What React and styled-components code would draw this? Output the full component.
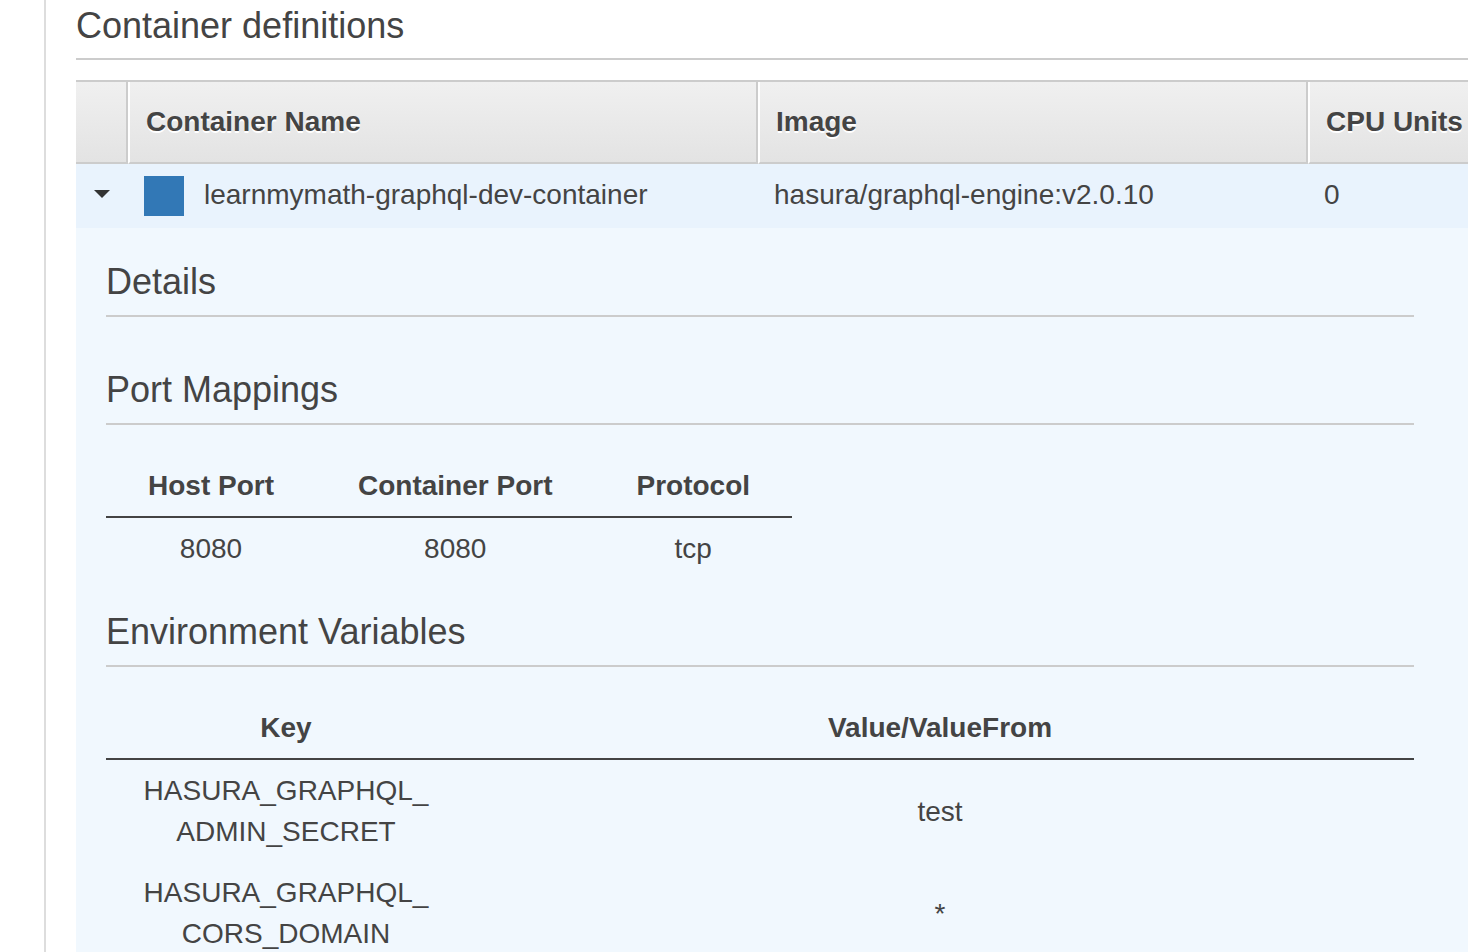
import React from 'react';
import styled, { createGlobalStyle } from 'styled-components';

const GlobalStyle = createGlobalStyle`
    * { box-sizing: border-box; }
    html, body {
        margin: 0;
        padding: 0;
        overflow: hidden;
        background: #FFFFFF;
        font-family: "Liberation Sans", Arial, Helvetica, sans-serif;
        color: #444444;
    }
`;

const portMappings = [
    { host: '8080', container: '8080', protocol: 'tcp' },
];

const envVars = [
    { key: ['HASURA_GRAPHQL_', 'ADMIN_SECRET'], value: 'test' },
    { key: ['HASURA_GRAPHQL_', 'CORS_DOMAIN'], value: '*' },
];

export default function App() {
    return (
        <>
            <GlobalStyle />
            <Page>
                <Panel>
                    <Title>Container definitions</Title>
                    <Grid>
                        <thead>
                            <tr>
                                <HeadCell $w={52} $first />
                                <HeadCell $w={630}>Container Name</HeadCell>
                                <HeadCell $w={550}>Image</HeadCell>
                                <HeadCell $w={400}>CPU Units</HeadCell>
                            </tr>
                        </thead>
                        <tbody>
                            <SelectedRow>
                                <ToggleCell><Caret /></ToggleCell>
                                <RowCell>
                                    <NameBox>
                                        <Swatch />
                                        learnmymath-graphql-dev-container
                                    </NameBox>
                                </RowCell>
                                <RowCell>hasura/graphql-engine:v2.0.10</RowCell>
                                <RowCell>0</RowCell>
                            </SelectedRow>
                            <tr>
                                <DetailCell colSpan={4}>
                                    <Detail>
                                        <Section>
                                            <SectionTitle>Details</SectionTitle>
                                            <SectionBody />
                                        </Section>
                                        <Section>
                                            <SectionTitle>Port Mappings</SectionTitle>
                                            <SectionBody>
                                                <PortTable>
                                                    <thead>
                                                        <tr>
                                                            <SubHead>Host Port</SubHead>
                                                            <SubHead>Container Port</SubHead>
                                                            <SubHead>Protocol</SubHead>
                                                        </tr>
                                                    </thead>
                                                    <tbody>
                                                        {portMappings.map((p, i) => (
                                                            <tr key={i}>
                                                                <SubCell>{p.host}</SubCell>
                                                                <SubCell>{p.container}</SubCell>
                                                                <SubCell>{p.protocol}</SubCell>
                                                            </tr>
                                                        ))}
                                                    </tbody>
                                                </PortTable>
                                            </SectionBody>
                                        </Section>
                                        <Section>
                                            <SectionTitle>Environment Variables</SectionTitle>
                                            <SectionBody>
                                                <EnvTable>
                                                    <colgroup>
                                                        <col style={{ width: 360 }} />
                                                        <col />
                                                    </colgroup>
                                                    <thead>
                                                        <tr>
                                                            <SubHead>Key</SubHead>
                                                            <SubHead>Value/ValueFrom</SubHead>
                                                        </tr>
                                                    </thead>
                                                    <tbody>
                                                        {envVars.map((v, i) => (
                                                            <tr key={i}>
                                                                <KeyCell>{v.key[0]}<wbr />{v.key[1]}</KeyCell>
                                                                <SubCell>{v.value}</SubCell>
                                                            </tr>
                                                        ))}
                                                    </tbody>
                                                </EnvTable>
                                            </SectionBody>
                                        </Section>
                                    </Detail>
                                </DetailCell>
                            </tr>
                        </tbody>
                    </Grid>
                </Panel>
            </Page>
        </>
    );
}

//#region -= Styled Components =-
const Page = styled.div`
    width: 100vw;
    height: 100vh;
    overflow: hidden;
`;
const Panel = styled.div`
    margin-left: 44px;
    min-height: 100vh;
    border-left: 2px solid #DDDDDD;
    padding-left: 30px;
`;
const Title = styled.h2`
    margin: 0;
    padding: 4px 0 10px 0;
    font-size: 36px;
    line-height: 44px;
    font-weight: 400;
    color: #444444;
    border-bottom: 2px solid #CCCCCC;
`;
const Grid = styled.table`
    margin-top: 20px;
    border-collapse: separate;
    border-spacing: 0;
    table-layout: fixed;
    width: 1632px;
    border-top: 2px solid #CCCCCC;
`;
const HeadCell = styled.th`
    width: ${ props => props.$w }px;
    height: 82px;
    padding: 0 16px;
    text-align: left;
    vertical-align: middle;
    font-size: 28px;
    font-weight: 700;
    color: #444444;
    text-shadow: 0 2px 0 #FFFFFF;
    white-space: nowrap;
    background: linear-gradient(#F0F0F0, #E3E3E3);
    border-bottom: 2px solid #CCCCCC;
    border-right: 2px solid #CCCCCC;
    border-left: ${ props => props.$first ? 'none' : '2px solid #FFFFFF' };
`;
const SelectedRow = styled.tr`
    background: #E9F3FD;
`;
const ToggleCell = styled.td`
    height: 64px;
    padding: 0;
    text-align: center;
    vertical-align: middle;
`;
const Caret = styled.span`
    display: inline-block;
    width: 0;
    height: 0;
    border-left: 8px solid transparent;
    border-right: 8px solid transparent;
    border-top: 8px solid #333333;
    transform: translateY(-3px);
`;
const RowCell = styled.td`
    height: 64px;
    padding: 0 16px 4px 16px;
    vertical-align: middle;
    font-size: 28px;
    line-height: 41px;
    color: #444444;
    white-space: nowrap;
`;
const NameBox = styled.div`
    display: flex;
    align-items: center;
    gap: 20px;
`;
const Swatch = styled.span`
    display: inline-block;
    width: 40px;
    height: 40px;
    background: #3278B6;
    transform: translateY(2px);
`;
const DetailCell = styled.td`
    padding: 32px 0 0 30px;
    background: #F1F8FE;
    vertical-align: top;
`;
const Detail = styled.div`
    width: 1308px;
`;
const Section = styled.section`
    & + & {
        margin-top: 31px;
    }
`;
const SectionTitle = styled.h3`
    margin: 0;
    padding-bottom: 11px;
    font-size: 36px;
    line-height: 44px;
    font-weight: 400;
    color: #444444;
    border-bottom: 2px solid #CCCCCC;
`;
const SectionBody = styled.div`
    padding-top: 20px;
`;
const PortTable = styled.table`
    margin-top: 10px;
    border-collapse: collapse;
`;
const EnvTable = styled.table`
    margin-top: 10px;
    width: 100%;
    border-collapse: collapse;
    table-layout: fixed;
`;
const SubHead = styled.th`
    padding: 10px 42px;
    font-size: 28px;
    line-height: 41px;
    font-weight: 700;
    color: #444444;
    text-align: center;
    white-space: nowrap;
    border-bottom: 2px solid #444444;
`;
const SubCell = styled.td`
    padding: 10px 42px;
    font-size: 28px;
    line-height: 41px;
    color: #444444;
    text-align: center;
    vertical-align: middle;
`;
const KeyCell = styled(SubCell)`
    padding: 10px 20px;
    overflow-wrap: break-word;
`;
//#endregion
